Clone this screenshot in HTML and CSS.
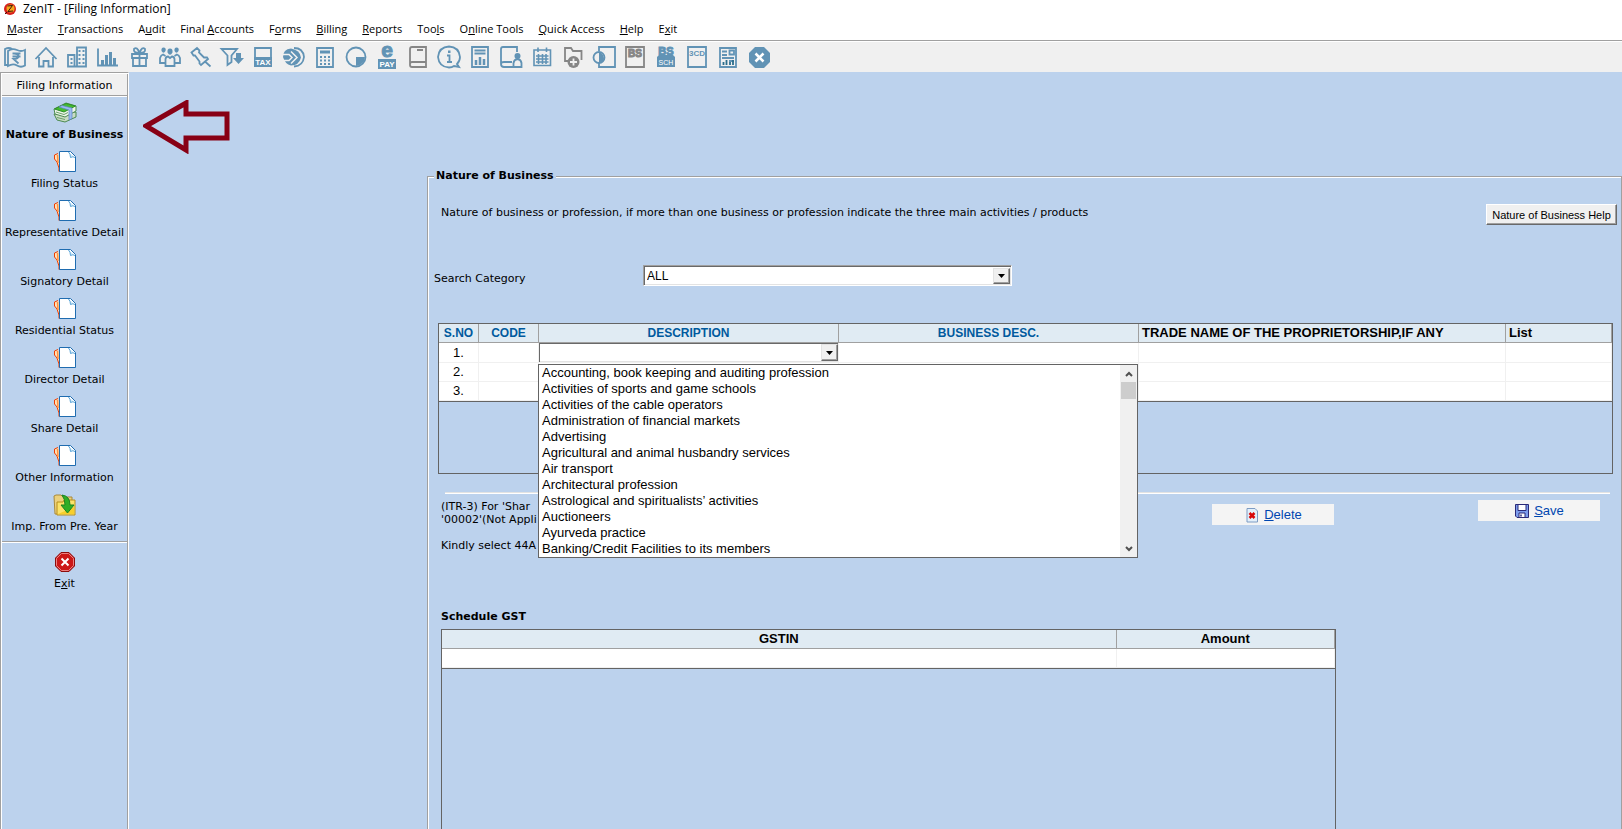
FILE: index.html
```html
<!DOCTYPE html>
<html lang="en">
<head>
    <meta charset="UTF-8">
    <meta name="viewport" content="width=device-width, initial-scale=1.0">
    <title>ZenIT - [Filing Information]</title>
    <link rel="stylesheet" href="styles.css">
</head>
<body>
    <!-- Shared sidebar icon -->
    <svg class="defs" width="0" height="0">
        <symbol id="pages" viewBox="0 0 24 24">
            <path d="M5 3.500 L1.500 5 V9 L4 12 L6 18 V21.500 H11" fill="#ffe2b8" stroke="#f03c00"/>
            <path d="M4.500 5 L5 13" stroke="#ff9040" stroke-width="1.500"/>
            <path d="M6.500 1.500 H17.500 L22.500 6.500 V21.500 H6.500 Z" fill="#fff" stroke="#1f6cb0"/>
            <path d="M15.500 2 Q17.500 4 17.500 7.500 Q20 6 22 7.500" fill="#d8ecfa" stroke="#5aa5d8"/>
        </symbol>
    </svg>

    <header>
        <div class="titlebar">
            <svg class="logo" viewBox="0 0 14 14">
                <circle cx="7" cy="7" r="6" fill="#d8201c"/>
                <circle cx="7.500" cy="6.500" r="4" fill="#f5a81c"/>
                <path d="M4.500 4 L9.500 3.500 L5 9.500 L10 9 M2 12 L4 10" fill="none" stroke="#3c1408"/>
            </svg>
            <span>ZenIT - [Filing Information]</span>
        </div>
        <nav class="menubar">
            <a href="#"><u>M</u>aster</a>
            <a href="#"><u>T</u>ransactions</a>
            <a href="#">A<u>u</u>dit</a>
            <a href="#">Final <u>A</u>ccounts</a>
            <a href="#">F<u>o</u>rms</a>
            <a href="#"><u>B</u>illing</a>
            <a href="#"><u>R</u>eports</a>
            <a href="#">Too<u>l</u>s</a>
            <a href="#">O<u>n</u>line Tools</a>
            <a href="#"><u>Q</u>uick Access</a>
            <a href="#"><u>H</u>elp</a>
            <a href="#">E<u>x</u>it</a>
        </nav>
        <div class="toolbar">
            <button aria-label="Income"><svg viewBox="0 0 24 24"><path d="M5 20 H2 V4 Q6 2 9 4 M5 6 V21 Q10 18 14 20.500 Q18 23 22 20.500 V5 Q18 7 14 5 Q9 3 5 6 Z"/><path d="M9.500 8.500 H17.500 M9.500 11.500 H17.500 M11 8.500 Q15.500 8.500 15.500 11 Q15.500 14 10.500 14 L15.500 18.500"/></svg></button>
            <button aria-label="Home"><svg viewBox="0 0 24 24"><path d="M1.500 14 L12 3 L22.500 14 M5 12 V21.500 H9.500 V16 H14.500 V21.500 H19 V12"/></svg></button>
            <button aria-label="Company"><svg viewBox="0 0 24 24"><path d="M12 21 V2.500 H21 V21.500 H3 V10 H9.500 V21"/><path d="M14.500 5 V19 M18.500 5 V19 M6.500 13 V20" stroke-dasharray="2 2" stroke-width="2"/></svg></button>
            <button aria-label="Chart"><svg viewBox="0 0 24 24"><path d="M2 3.500 V20.500 H22"/><path d="M6.500 20 V15 M10.500 20 V10 M14.500 20 V7 M18.500 20 V13" stroke-width="3"/></svg></button>
            <button aria-label="Gift"><svg viewBox="0 0 24 24"><path d="M5 9 H20 V13 H5 Z M6 13 V21 H19 V13 M12.500 8 V21 M12.500 8 Q6 8 7 4 Q10 1 12.500 8 Q15 1 18 4 Q19 8 12.500 8"/></svg></button>
            <button aria-label="Clients"><svg viewBox="0 0 24 24"><path d="M7.500 21 V14 Q8 11.500 10 11.500 L12 13 L14 11.500 Q16 11.500 16.500 14 V21 Z M7 18 H2 V13 Q3 10 5 9.500 L7.500 11 M17 18 H22 V13 Q21 10 19 9.500 L16.500 11"/><path class="fill" d="M12 3.500 Q15 3.500 14.500 7.500 Q12 12 9.500 7.500 Q9 3.500 12 3.500 M5.500 2.500 Q8.500 2.500 7.500 6 Q5.500 9.500 3.500 6 Q3 2.500 5.500 2.500 M18.500 2.500 Q21.500 2.500 20.500 6 Q18.500 9.500 16.500 6 Q16 2.500 18.500 2.500"/></svg></button>
            <button aria-label="Pin"><svg viewBox="0 0 24 24"><path d="M2.500 7.500 L8 3 L10.500 5.500 L10 7.500 L15 12.500 H18 L19 14 L12 20 L10.500 18.500 V16.500 L6 10.500 H4.500 Z M16 16.500 L21.500 21.500"/></svg></button>
            <button aria-label="Filter"><svg viewBox="0 0 24 24"><path d="M1.500 4 H17 L11.500 10.500 V17 L7.500 20 V10.500 Z"/><path class="fill" d="M16 8 H21 V13 H24 L18.500 19 L13 13 H16 Z"/></svg></button>
            <button aria-label="Tax"><svg viewBox="0 0 24 24"><path d="M4 3 H20 V21 H4 Z"/><path class="fill" d="M3 12 H21 V22 H3 Z"/><text class="light" x="12" y="20" font-size="8">TAX</text></svg></button>
            <button aria-label="Transfer"><svg viewBox="0 0 24 24"><path d="M12 3 Q21 3 22 12 Q21 21 12 21.500" /><path class="fill" d="M1 12 Q1 4 9 3.500 Q18 5 19 12.500 Q17 20.500 9 20.500 Q3 19 1 12"/><path d="M1 9.500 H7 L10 12.500 L7 15.500 H2 M9 6.500 L15 12.500 L9 18.500" stroke="#f0f0f0" stroke-width="1.500"/></svg></button>
            <button aria-label="Calculator"><svg viewBox="0 0 24 24"><path d="M4 3 H20 V22 H4 Z"/><path d="M7 7 H17" stroke-width="3"/><path d="M7 12 H17 M7 15.500 H17 M7 19 H17" stroke-width="2" stroke-dasharray="2 2"/></svg></button>
            <button aria-label="Pie"><svg viewBox="0 0 24 24"><circle cx="12" cy="12" r="9.500"/><path class="fill" d="M12 12 H21 Q20 20 12 21 Z"/></svg></button>
            <button aria-label="e-Pay"><svg viewBox="0 0 24 24"><text class="heavy" x="12" y="12" font-size="21">e</text><path class="fill" d="M3 14 H21 V24 H3 Z"/><text class="light" x="12" y="22" font-size="8">PAY</text></svg></button>
            <button class="grey" aria-label="Ledger"><svg viewBox="0 0 24 24"><path d="M20 17 V2 H6 Q4 2 4 4 V20 Q4 22 6 22 H20 V17 H6 Q4 17 4 19 M11 5 H17"/></svg></button>
            <button aria-label="Information"><svg viewBox="0 0 24 24"><path d="M20 19 Q23 16 23 12 Q22 2 12 1.500 Q2 2 1 12 Q2 22 12 22.500 Q15 22.500 17 21 L22 22 Z M10 10.500 H12.500 V16 M10 17 H15"/><path class="fill" d="M11 5.500 H13.500 V8 H11 Z"/></svg></button>
            <button aria-label="Report"><svg viewBox="0 0 24 24"><path d="M4 2 H20 V22 H4 Z M6.500 5.500 H17.500 M6.500 8.500 H17.500"/><path d="M8 20 V15 M12 20 V12 M16 20 V14" stroke-width="2.500"/></svg></button>
            <button aria-label="User ledger"><svg viewBox="0 0 24 24"><path d="M18 7 V2 H4 Q2 2 2 4 V19 Q2 22 5 22 H14 M2 19 Q2 17 5 17 H13 M14.500 22 V18 Q15 14.500 18.500 14 Q22 14.500 22.500 18 V22 Z"/><circle class="fill" cx="18.500" cy="11" r="3"/></svg></button>
            <button aria-label="Calendar"><svg viewBox="0 0 24 24"><path d="M4 5 H20.500 V20.500 H4 Z M8 2.500 V7 M16.500 2.500 V7 M6 11 H18.500 M6 14 H18.500 M6 17 H18.500 M8.500 9 V19 M12.500 9 V19 M16 9 V19" stroke-width="1.600"/></svg></button>
            <button class="grey" aria-label="New folder"><svg viewBox="0 0 24 24"><path d="M7 16 H4 V3 H10 L12 6 H20.500 V15"/><circle class="fill" cx="12.500" cy="17" r="6"/><path d="M9 17 H16 M12.500 13.500 V20.500" stroke="#f0f0f0"/></svg></button>
            <button aria-label="Convert"><svg viewBox="0 0 24 24"><path d="M7 6 V2 H23 V22 H7 V18"/><circle cx="7" cy="12.500" r="5.500"/><path class="fill" d="M7 8 H9 Q12 10 12 13 Q12 18 7 18 Z"/></svg></button>
            <button class="grey" aria-label="BS"><svg viewBox="0 0 24 24"><path d="M3 2 H21 V22 H3 Z"/><text class="heavy" x="12" y="12" font-size="10">BS</text></svg></button>
            <button aria-label="BS Schedule"><svg viewBox="0 0 24 24"><text class="heavy" x="12" y="10" font-size="11">BS</text><path class="fill" d="M3 12 L5 10 H19 L21 12 V22 H3 Z"/><text class="thin" x="12" y="20" font-size="7">SCH</text></svg></button>
            <button aria-label="3CD"><svg viewBox="0 0 24 24"><path d="M3 2 H21 V22 H3 Z"/><text x="12" y="11" font-size="8">3CD</text></svg></button>
            <button aria-label="Sheet"><svg viewBox="0 0 24 24"><path d="M4 3 H20 V22 H4 Z M13.500 5.500 H18 V9.500 H13.500 Z M6 6.500 H11 M6 10 H11 M6 13 H18 M13 16 H18"/><path d="M7.500 20 V17 M10.500 20 V15 M14 20 V17 M17 20 V15" stroke="#2c6e8c"/></svg></button>
            <button aria-label="Close"><svg viewBox="0 0 24 24"><path class="fill" d="M8 2 H17 L23 8 V17 L17 23 H8 L2 17 V8 Z"/><path d="M8.500 8.500 L16.500 16.500 M16.500 8.500 L8.500 16.500" stroke="#fff" stroke-width="2.500"/></svg></button>
        </div>
    </header>

    <div class="workspace">
        <aside class="sidebar">
            <h1>Filing Information</h1>
            <button class="side-item active">
                <svg viewBox="0 0 24 24">
                    <path d="M1 13 L4 19 L12 21 L23 16 V11 Z" fill="#c9dcc4" stroke="#4b8a4f"/>
                    <path d="M1 8 L13 2 L23 5 V10 L12 16 L2 13 Z" fill="#eef6ea" stroke="#4b8a4f"/>
                    <path d="M1.500 8 L13 2.500 L22.500 5 L11 11 Z" fill="#45bd2f" stroke="#2f8f2a"/>
                    <path d="M6 6 L9 4.500 L19 7 V17.500 L16 19 V9 Z" fill="#9dbdf0" stroke="#5a82c8" stroke-width=".7"/>
                    <path d="M3 11 L11 13.500 L15 11.500 M4 16.500 L12 18.500" fill="none" stroke="#6aa06a"/>
                </svg>
                <span>Nature of Business</span>
            </button>
            <button class="side-item"><svg><use href="#pages"/></svg><span>Filing Status</span></button>
            <button class="side-item"><svg><use href="#pages"/></svg><span>Representative Detail</span></button>
            <button class="side-item"><svg><use href="#pages"/></svg><span>Signatory Detail</span></button>
            <button class="side-item"><svg><use href="#pages"/></svg><span>Residential Status</span></button>
            <button class="side-item"><svg><use href="#pages"/></svg><span>Director Detail</span></button>
            <button class="side-item"><svg><use href="#pages"/></svg><span>Share Detail</span></button>
            <button class="side-item"><svg><use href="#pages"/></svg><span>Other Information</span></button>
            <button class="side-item">
                <svg viewBox="0 0 24 24">
                    <path d="M1 3 L3 2 H8 L10 4 H19 V21 H2 Z" fill="#ecd07c" stroke="#a8893a"/>
                    <path d="M4 22 V9 H10 L11 7 H22 V22 Z" fill="#fbe36a" stroke="#b8901c"/>
                    <path d="M5 21 L21 14 V21 Z" fill="#f8cf2c"/>
                    <path d="M9 2 Q17 3 17 12 H21 L14.500 20 L8 12 H12 Q12 6 9 2 Z" fill="#2fae26" stroke="#1d8420"/>
                </svg>
                <span>Imp. From Pre. Year</span>
            </button>
            <hr>
            <button class="side-item">
                <svg viewBox="0 0 24 24">
                    <path d="M8 2.500 H16 L21.500 8 V16 L16 21.500 H8 L2.500 16 V8 Z" fill="#cc1818" stroke="#8c0c0c"/>
                    <path d="M8.500 3.500 H15.500 L20.500 8.500 V15.500 L15.500 20.500 H8.500 L3.500 15.500 V8.500 Z" fill="none" stroke="#ec8080"/>
                    <path d="M8.500 8.500 L15.500 15.500 M15.500 8.500 L8.500 15.500" stroke="#fff" stroke-width="2"/>
                </svg>
                <span>E<u>x</u>it</span>
            </button>
        </aside>

        <main>
            <div class="pointer">
                <svg viewBox="0 0 88 54">
                    <path d="M3 26 L43 3 V14 H84 V38 H43 V50 Z" fill="none" stroke="#880015" stroke-width="5"/>
                </svg>
            </div>

            <fieldset class="panel">
                <legend>Nature of Business</legend>

                <div class="intro">
                    <p>Nature of business or profession, if more than one business or profession indicate the three main activities / products</p>
                    <button class="help-btn">Nature of Business Help</button>
                </div>

                <div class="search">
                    <label for="category">Search Category</label>
                    <div class="combo">
                        <select id="category"><option>ALL</option></select>
                        <span class="combo-btn"><svg viewBox="0 0 7 4"><path d="M0 0 H7 L3.500 4 Z"/></svg></span>
                    </div>
                </div>

                <div class="grid business">
                    <table>
                        <colgroup>
                            <col class="c-no"><col class="c-code"><col class="c-desc"><col class="c-desc"><col class="c-trade"><col>
                        </colgroup>
                        <thead>
                            <tr>
                                <th class="blue">S.NO</th>
                                <th class="blue">CODE</th>
                                <th class="blue">DESCRIPTION</th>
                                <th class="blue">BUSINESS DESC.</th>
                                <th class="left">TRADE NAME OF THE PROPRIETORSHIP,IF ANY</th>
                                <th class="left">List</th>
                            </tr>
                        </thead>
                        <tbody>
                            <tr>
                                <td>1.</td>
                                <td></td>
                                <td class="editing">
                                    <div class="combo">
                                        <select aria-label="Description"><option></option></select>
                                        <span class="combo-btn"><svg viewBox="0 0 7 4"><path d="M0 0 H7 L3.500 4 Z"/></svg></span>
                                    </div>
                                    <div class="dropdown">
                                        <ul role="listbox" aria-label="Description options">
                                            <li role="option">Accounting, book keeping and auditing profession</li>
                                            <li role="option">Activities of sports and game schools</li>
                                            <li role="option">Activities of the cable operators</li>
                                            <li role="option">Administration of financial markets</li>
                                            <li role="option">Advertising</li>
                                            <li role="option">Agricultural and animal husbandry services</li>
                                            <li role="option">Air transport</li>
                                            <li role="option">Architectural profession</li>
                                            <li role="option">Astrological and spiritualists’ activities</li>
                                            <li role="option">Auctioneers</li>
                                            <li role="option">Ayurveda practice</li>
                                            <li role="option">Banking/Credit Facilities to its members</li>
                                        </ul>
                                        <div class="scrollbar">
                                            <svg viewBox="0 0 8 6"><path d="M1 5 L4 2 L7 5"/></svg>
                                            <div class="thumb"></div>
                                            <svg viewBox="0 0 8 6"><path d="M1 1 L4 4 L7 1"/></svg>
                                        </div>
                                    </div>
                                </td>
                                <td></td>
                                <td></td>
                                <td></td>
                            </tr>
                            <tr><td>2.</td><td></td><td></td><td></td><td></td><td></td></tr>
                            <tr><td>3.</td><td></td><td></td><td></td><td></td><td></td></tr>
                        </tbody>
                    </table>
                </div>

                <hr>

                <div class="actions">
                    <div class="notes">
                        <p>(ITR-3) For 'Shar<br>'00002'(Not Appli</p>
                        <p>Kindly select 44A</p>
                    </div>
                    <button class="action-btn delete">
                        <svg viewBox="0 0 16 16">
                            <path d="M3 1.500 H11 L13.500 4 V15 H3 Z" fill="#e4f0fa" stroke="#7d9cc4"/>
                            <path d="M5.500 6 L10.500 11 M10.500 6 L5.500 11" stroke="#d80808" stroke-width="2.500"/>
                        </svg>
                        <span><u>D</u>elete</span>
                    </button>
                    <button class="action-btn">
                        <svg viewBox="0 0 16 16">
                            <path d="M1.500 1.500 H14.500 V14.500 H3 L1.500 13 Z" fill="#7c9cec" stroke="#2b2a78"/>
                            <path d="M4 1.500 H12 V7.500 H4 Z M5 10 H11 V14.500 H5 Z" fill="#fff" stroke="#2b2a78"/>
                            <path d="M7 11.500 V13.500" stroke="#2b2a78" stroke-width="1.500"/>
                        </svg>
                        <span><u>S</u>ave</span>
                    </button>
                </div>

                <h2>Schedule GST</h2>
                <div class="grid gst">
                    <table>
                        <colgroup><col><col class="c-amount"></colgroup>
                        <thead>
                            <tr><th>GSTIN</th><th>Amount</th></tr>
                        </thead>
                        <tbody>
                            <tr><td></td><td></td></tr>
                        </tbody>
                    </table>
                </div>
            </fieldset>
        </main>
    </div>
</body>
</html>
```
FILE: styles.css
```css
* {
    box-sizing: border-box;
}
body {
    margin: 0;
    min-height: 100vh;
    display: flex;
    flex-direction: column;
    background-color: #bcd2ed;
    color: #000;
    font-family: "DejaVu Sans", Verdana, sans-serif;
    font-size: 11px;
    line-height: 14px;
}
p, h1, h2, ul {
    margin: 0;
    padding: 0;
}
button {
    font: inherit;
    color: inherit;
    border: none;
    padding: 0;
    background: none;
}
svg {
    display: block;
}
.defs {
    position: absolute;
}

/* Title, menu, toolbar */
.titlebar, .menubar {
    display: flex;
    align-items: center;
    background: #fff;
    font-family: "Open Sans", "Segoe UI", sans-serif;
    font-size: 11px;
}
.titlebar {
    height: 18px;
    gap: 6px;
    padding-left: 3px;
    font-size: 12px;
}
.logo {
    width: 14px;
    height: 14px;
}
.menubar {
    height: 22px;
    gap: 15px;
    padding-left: 7px;
}
.menubar a {
    color: #000;
    text-decoration: none;
    white-space: nowrap;
}
.toolbar {
    display: flex;
    gap: 7px;
    padding: 4px 3px 3px;
    background: #f0f0f0;
    border-top: 1px solid #a0a0a0;
    box-shadow: inset 0 1px 0 #fff;
}
.toolbar svg {
    width: 24px;
    height: 24px;
    fill: none;
    stroke: #6193b5;
    stroke-width: 1.8;
    overflow: visible;
}
.toolbar .fill {
    fill: #6193b5;
    stroke: none;
}
.toolbar text {
    fill: #6193b5;
    stroke: none;
    font-family: "Liberation Sans", Arial, sans-serif;
    font-weight: bold;
    text-anchor: middle;
}
.toolbar .heavy {
    stroke: #6193b5;
    stroke-width: 1;
}
.toolbar .light, .toolbar .thin {
    fill: #fff;
}
.toolbar .thin {
    font-weight: normal;
}
.toolbar .grey svg, .toolbar .grey .heavy {
    stroke: #868686;
}
.toolbar .grey .fill, .toolbar .grey text {
    fill: #868686;
}

/* Sidebar */
.workspace {
    flex: 1;
    display: flex;
}
.sidebar {
    width: 129px;
    flex-shrink: 0;
    border-left: 1px solid #a0a0a0;
    border-right: 1px solid #fff;
    border-top: 1px solid #a0a0a0;
    box-shadow: inset 1px 1px 0 #fff, inset -1px 0 0 #a0a0a0;
    padding: 1px 1px 0;
}
.sidebar h1 {
    height: 22px;
    background: #f0f0f0;
    border-bottom: 1px solid #a0a0a0;
    box-shadow: 0 1px 0 #fff;
    font-size: 11px;
    font-weight: normal;
    line-height: 24px;
    text-align: center;
}
.side-item {
    width: 100%;
    height: 49px;
    display: flex;
    flex-direction: column;
    align-items: center;
    gap: 3px;
    padding-top: 5px;
    white-space: nowrap;
}
.side-item svg {
    width: 24px;
    height: 24px;
    fill: none;
    flex-shrink: 0;
}
.side-item.active {
    font-weight: bold;
}
.sidebar hr, .panel hr {
    border: none;
    border-top: 1px solid #a0a0a0;
    border-bottom: 1px solid #fff;
}
.sidebar hr {
    margin: 4px 0 2px;
}

/* Work area */
main {
    flex: 1;
    min-width: 0;
    display: flex;
}
.pointer {
    width: 298px;
    flex-shrink: 0;
    padding: 28px 14px;
}
.pointer svg {
    width: 88px;
    height: 54px;
}
.panel {
    flex: 1;
    min-width: 0;
    display: flex;
    flex-direction: column;
    margin: 97px 0 0;
    padding: 0;
    border: 1px solid #a0a0a0;
    border-bottom: none;
    box-shadow: inset 1px 1px 0 #fff;
}
.panel legend {
    margin-left: 6px;
    padding: 0 2px;
    background: #bcd2ed;
    font-weight: bold;
}
.intro {
    display: flex;
    justify-content: space-between;
    align-items: center;
    padding: 21px 4px 0 13px;
}
.intro p {
    padding-bottom: 4px;
}
.help-btn {
    width: 131px;
    height: 21px;
    background: #f0f0f0;
    border: 1px solid #fff;
    border-right-color: #696969;
    border-bottom-color: #696969;
    box-shadow: inset -1px -1px 0 #a0a0a0;
    font-family: "Liberation Sans", Arial, sans-serif;
    line-height: 12px;
    white-space: nowrap;
}
.search {
    display: flex;
    align-items: flex-end;
    margin-top: 40px;
    padding-left: 6px;
}
.search label {
    width: 209px;
}
.combo {
    display: flex;
    background: #fff;
    border: 1px solid #a0a0a0;
    border-right-color: #fff;
    border-bottom-color: #fff;
    box-shadow: inset 1px 1px 0 #696969, inset -1px -1px 0 #e3e3e3;
    padding: 2px 1px 1px 2px;
}
.search .combo {
    width: 369px;
    height: 21px;
}
.combo select {
    flex: 1;
    min-width: 0;
    appearance: none;
    border: none;
    background: none;
    padding: 0 1px;
    color: #000;
    font-family: "Liberation Sans", Arial, sans-serif;
    font-size: 12px;
}
.combo-btn {
    width: 17px;
    display: flex;
    align-items: center;
    justify-content: center;
    background: #f0f0f0;
    border: 1px solid #e3e3e3;
    border-right-color: #696969;
    border-bottom-color: #696969;
    box-shadow: inset -1px -1px 0 #a0a0a0;
}
.combo-btn svg {
    width: 7px;
    height: 4px;
}

/* Data grids */
.grid {
    border: 1px solid #646464;
    font-family: "Liberation Sans", Arial, sans-serif;
    font-size: 13px;
}
.grid table {
    width: 100%;
    table-layout: fixed;
    border-collapse: separate;
    border-spacing: 0;
    border-bottom: 1px solid #646464;
}
.grid th, .grid td {
    height: 19px;
    padding: 0;
    line-height: 16px;
    text-align: center;
    border-right: 1px solid #f0f0f0;
    border-bottom: 1px solid #f0f0f0;
}
.grid th {
    background: #e0ebf3;
    border-color: #a0a0a0;
    white-space: nowrap;
}
.grid td {
    background: #fff;
}
.grid .blue {
    color: #005a9e;
    font-size: 12px;
}
.grid .left {
    padding-left: 3px;
    text-align: left;
}
.business {
    height: 151px;
    margin: 37px 8px 0 10px;
}
.c-no { width: 40px; }
.c-code { width: 60px; }
.c-desc { width: 300px; }
.c-trade { width: 367px; }
.c-amount { width: 218px; }
.editing {
    position: relative;
}
.editing .combo {
    height: 19px;
    border: none;
    padding: 1px 0 1px 1px;
}
.dropdown {
    position: absolute;
    z-index: 1;
    top: 21px;
    left: -1px;
    width: calc(200% + 2px);
    display: flex;
    background: #fff;
    border: 1px solid #646464;
}
.dropdown ul {
    flex: 1;
    padding-left: 3px;
    list-style: none;
    text-align: left;
}
.scrollbar {
    width: 17px;
    display: flex;
    flex-direction: column;
    align-items: center;
    padding: 6px 0 5px;
    background: #f0f0f0;
}
.scrollbar svg {
    width: 8px;
    height: 6px;
    fill: none;
    stroke: #505050;
    stroke-width: 2;
}
.scrollbar svg:last-child {
    margin-top: auto;
}
.thumb {
    width: 15px;
    height: 17px;
    margin-top: 5px;
    background: #cdcdcd;
}

.panel hr {
    width: calc(100% - 28px);
    margin: 18px 11px 0 17px;
    border-top-color: #e3e3e3;
}
.actions {
    display: flex;
    align-items: flex-start;
    padding: 6px 21px 0 13px;
}
.notes {
    flex: 1;
    line-height: 13px;
}
.notes p + p {
    margin-top: 13px;
}
.action-btn {
    width: 122px;
    height: 21px;
    display: flex;
    align-items: center;
    justify-content: center;
    gap: 4px;
    background: #f4f4f4;
    color: #0046b0;
    font-family: "Liberation Sans", Arial, sans-serif;
    font-size: 13px;
}
.action-btn svg {
    width: 16px;
    height: 16px;
}
.delete {
    margin: 4px 144px 0 0;
}
.panel h2 {
    margin: 58px 0 5px 13px;
    font-size: 11px;
}
.gst {
    flex: 1;
    width: 75%;
    margin-left: 13px;
    border-bottom: none;
}
```
